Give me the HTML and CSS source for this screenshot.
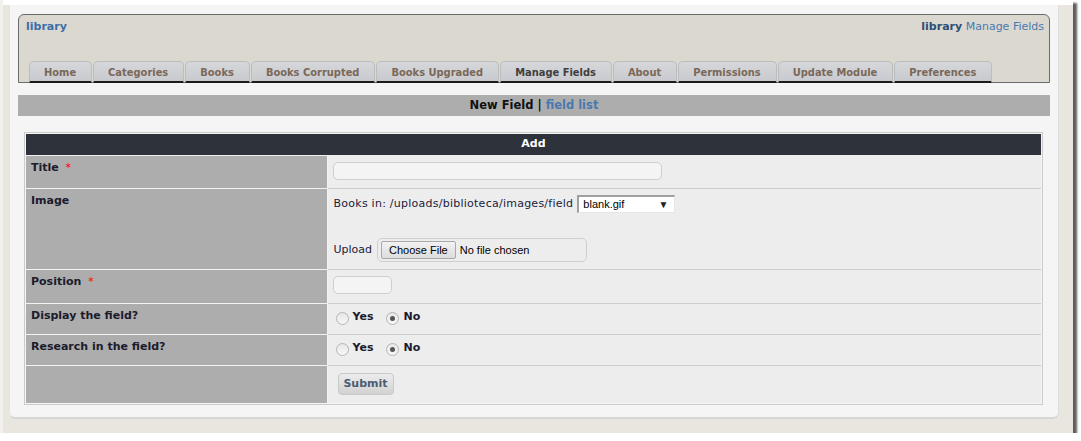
FILE: index.html
```html
<!DOCTYPE html>
<html>
<head>
<meta charset="utf-8">
<link rel="stylesheet" href="styles.css">
</head>
<body>
<div class="frame">
  <div class="panel">
    <div class="header">
      <div class="header-top">
        <a class="mod-link">library</a>
        <div class="crumbs"><b>library</b> <a>Manage Fields</a></div>
      </div>
      <div class="tabs">
        <div class="tab">Home</div>
        <div class="tab">Categories</div>
        <div class="tab">Books</div>
        <div class="tab">Books Corrupted</div>
        <div class="tab">Books Upgraded</div>
        <div class="tab active">Manage Fields</div>
        <div class="tab">About</div>
        <div class="tab">Permissions</div>
        <div class="tab">Update Module</div>
        <div class="tab">Preferences</div>
      </div>
    </div>
    <div class="subbar"><b>New Field</b> <span class="sep">|</span> <a>field list</a></div>
    <div class="form-wrap">
      <table class="form">
        <tr><th colspan="2">Add</th></tr>
        <tr class="r-title">
          <td class="lbl">Title <span class="req">*</span></td>
          <td class="val"><div class="input wide"></div></td>
        </tr>
        <tr class="r-image">
          <td class="lbl">Image</td>
          <td class="val">
            <div class="line">
              <span class="plain">Books in: /uploads/biblioteca/images/field</span>
              <div class="select"><span>blank.gif</span><span class="arrow">▼</span></div>
            </div>
            <div class="line upload">
              <span class="plain">Upload</span>
              <div class="file"><span class="choose">Choose File</span><span class="nofile">No file chosen</span></div>
            </div>
          </td>
        </tr>
        <tr class="r-pos">
          <td class="lbl">Position <span class="req">*</span></td>
          <td class="val"><div class="input short"></div></td>
        </tr>
        <tr class="r-radio">
          <td class="lbl">Display the field?</td>
          <td class="val">
            <div class="radios">
              <span class="radio"></span><b>Yes</b>
              <span class="radio checked"></span><b>No</b>
            </div>
          </td>
        </tr>
        <tr class="r-radio">
          <td class="lbl">Research in the field?</td>
          <td class="val">
            <div class="radios">
              <span class="radio"></span><b>Yes</b>
              <span class="radio checked"></span><b>No</b>
            </div>
          </td>
        </tr>
        <tr class="r-submit">
          <td class="lbl"></td>
          <td class="val"><div class="submit">Submit</div></td>
        </tr>
      </table>
    </div>
  </div>
</div>
</body>
</html>
```

FILE: styles.css
```css
* { box-sizing: border-box; }
html, body { margin: 0; padding: 0; background: #fff; }
body { font-family: "DejaVu Sans", Verdana, sans-serif; font-size: 11px; color: #1b1b2b; }

.frame {
  width: 1073px;
  height: 433px;
  background: #e9e6df;
  border-left: 3px solid #f1f0ed;
  box-shadow: 4px 3px 2px rgba(40,40,40,0.75);
  padding: 5px 14px 0 6px;
  position: relative;
}
.frame::before {
  content: "";
  position: absolute;
  left: 0; right: 0; top: 0; height: 5px;
  background: #fff;
}
.panel {
  width: 1050px;
  height: 414px;
  background: #f5f5f5;
  border-radius: 0 0 6px 6px;
  border-bottom: 2px solid #d6d6d6;
  border-right: 1px solid #dedede;
  border-left: 1px solid #e4e4e4;
  padding: 9px 8px 0 8px;
}

.header {
  height: 69px;
  background: #dbd8d0;
  border: 1px solid #6b6b6b;
  border-radius: 6px 6px 0 0;
  display: flex;
  flex-direction: column;
  justify-content: space-between;
}
.header-top {
  display: flex;
  justify-content: space-between;
  padding: 5px 5px 0 7px;
  font-size: 11px;
}
.mod-link { color: #3a6ea8; font-weight: bold; }
.crumbs { color: #4a79b0; }
.crumbs b { color: #2d4e75; }

.tabs {
  display: flex;
  gap: 1px;
  padding-left: 10px;
  margin-bottom: -1px;
}
.tab {
  height: 22px;
  padding: 3px 15px 0 14px;
  font-family: "DejaVu Sans Condensed", "DejaVu Sans", sans-serif;
  font-weight: bold;
  font-size: 11px;
  color: #7a6858;
  background: linear-gradient(#d6d7da, #c9cacf);
  border: 1px solid #bdbdbd;
  border-bottom: 2px solid #1c1c1c;
  border-radius: 5px 5px 0 0;
  line-height: 16px;
}
.tab.active { color: #3f3f3f; }

.subbar {
  margin-top: 12px;
  height: 21px;
  background: #adadad;
  text-align: center;
  font-size: 11.5px;
  font-weight: bold;
  line-height: 21px;
  color: #111;
}
.subbar a { color: #4a79b0; }

.form-wrap {
  margin: 16px 0 0 6px;
  width: 1019px;
  border: 1px solid #cbcbcb;
  padding: 1px;
  background: #f5f5f5;
}
.form {
  width: 100%;
  border-collapse: collapse;
}
.form th {
  background: #2e323b;
  color: #fff;
  font-weight: bold;
  height: 21px;
  padding: 0;
  border-bottom: 1px solid #f0f0f0;
  line-height: 20px;
}
.form td { padding: 0; vertical-align: top; }
.lbl {
  width: 301px;
  background: #adadad;
  font-weight: bold;
  padding: 5px 5px 0 5px !important;
  border-bottom: 1px solid #f2f2f2;
  border-right: 1px solid #f2f2f2;
}
.val {
  background: #ededed;
  border-bottom: 1px solid #cdcdcd;
  padding: 6px 0 0 5px !important;
}
.req { color: #f00; font-weight: normal; margin-left: 3px; }

.r-title td { height: 33px; }
.r-image td { height: 81px; }
.r-pos td { height: 34px; }
.r-radio td { height: 31px; }
.r-submit td { height: 38px; border-bottom: none; }

.input {
  height: 18px;
  border: 1px solid #cfcfcf;
  border-radius: 5px;
  background: #f4f4f4;
}
.input.wide { width: 329px; }
.input.short { width: 59px; }

.line { display: flex; align-items: center; }
.plain { color: #1b1b3b; margin-left: 1px; }
.line:first-child .plain { letter-spacing: 0.25px; }
.select {
  margin-left: 4px;
  width: 98px;
  height: 18px;
  background: #fff;
  border-top: 2px solid #a0a0a0;
  border-left: 2px solid #a0a0a0;
  border-right: 1px solid #e6e6e6;
  border-bottom: 1px solid #e6e6e6;
  font-family: "Liberation Sans", Arial, sans-serif;
  font-size: 11px;
  color: #000;
  display: flex;
  justify-content: space-between;
  align-items: center;
  padding: 0 6px 0 4px;
}
.arrow { font-size: 10px; color: #222; }
.upload { margin-top: 25px; }
.file {
  margin-left: 5px;
  width: 210px;
  height: 24px;
  border: 1px solid #cfcfcf;
  border-radius: 5px;
  display: flex;
  align-items: center;
  padding-left: 3px;
  font-family: "Liberation Sans", Arial, sans-serif;
  font-size: 11px;
  color: #000;
}
.choose {
  height: 18px;
  padding: 0 7px;
  border: 1px solid #a9a9a9;
  border-radius: 2px;
  background: linear-gradient(#f2f2f2, #dddddd);
  line-height: 16px;
}
.nofile { margin-left: 4px; }

.radios {
  display: flex;
  align-items: flex-start;
  padding-left: 3px;
}
.radio {
  width: 13px;
  height: 13px;
  border-radius: 50%;
  border: 1px solid #b5b5b5;
  background: linear-gradient(#e6e6e6, #f8f8f8);
  margin-top: 2px;
  margin-right: 4px;
  position: relative;
}
.radios b { margin-right: 13px; line-height: 14px; }
.radio.checked::after {
  content: "";
  position: absolute;
  left: 3px; top: 3px;
  width: 5px; height: 5px;
  border-radius: 50%;
  background: #555;
}

.submit {
  margin: 1px 0 0 5px;
  width: 56px;
  height: 22px;
  border: 1px solid #c9c9c9;
  border-radius: 4px;
  background: linear-gradient(#ececec, #d2d2d2);
  color: #4b5b74;
  font-weight: bold;
  text-align: center;
  line-height: 20px;
}
```
